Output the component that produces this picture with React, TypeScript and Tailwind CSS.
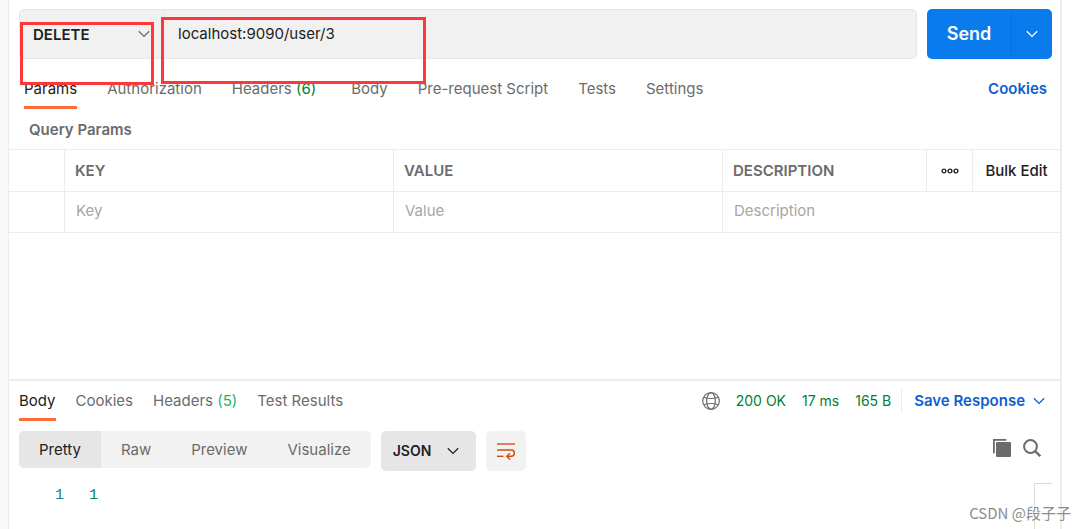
import { clsx } from "clsx";

const requestTabs = [
  { label: "Params", active: true },
  { label: "Authorization" },
  { label: "Headers", count: 6 },
  { label: "Body" },
  { label: "Pre-request Script" },
  { label: "Tests" },
  { label: "Settings" }
];

const responseTabs = [
  { label: "Body", active: true },
  { label: "Cookies" },
  { label: "Headers", count: 5 },
  { label: "Test Results" }
];

const viewModes = ["Pretty", "Raw", "Preview", "Visualize"];
const methods = ["DELETE", "GET", "POST", "PUT", "PATCH"];

type Tab = { label: string; active?: boolean; count?: number };

function Chevron({ className }: { className?: string }) {
  return (
    <svg viewBox="0 0 12 8" className={clsx("h-2 w-3 shrink-0", className)} fill="none" stroke="currentColor" strokeWidth="1.3" aria-hidden="true">
      <path d="M0.8 1.2 6 6.4l5.2-5.2" />
    </svg>
  );
}

function GlobeIcon() {
  return (
    <svg viewBox="0 0 18 18" className="h-[18px] w-[18px] text-[#6b6b6b]" fill="none" stroke="currentColor" strokeWidth="1.2" aria-hidden="true">
      <circle cx="9" cy="9" r="8.3" />
      <ellipse cx="9" cy="9" rx="4.3" ry="8.3" />
      <path d="M2 5.2c2 .9 4.4 1.3 7 1.3s5-.4 7-1.3M2 12.8c2-.9 4.4-1.3 7-1.3s5 .4 7 1.3" />
    </svg>
  );
}

function WrapIcon() {
  return (
    <svg viewBox="0 0 18 18" className="h-[18px] w-[18px]" fill="none" stroke="#d9480f" strokeWidth="1.4" aria-hidden="true">
      <path d="M0 2h18" strokeWidth="1.8" opacity="0.75" />
      <path d="M0 8h14.2a3.1 3.1 0 0 1 0 6.3H10" />
      <path d="m13 11.2-3.2 3.1 3.2 3.1" />
      <path d="M0 14.3h6.5" />
    </svg>
  );
}

function CopyIcon() {
  return (
    <svg viewBox="0 0 18 18" className="h-[18px] w-[18px]" aria-hidden="true">
      <path d="M0.9 14.2V0.9h12.4" fill="none" stroke="#6b6b6b" strokeWidth="1.8" />
      <rect x="3" y="3" width="15" height="15" rx="1" fill="#6b6b6b" />
    </svg>
  );
}

function SearchIcon() {
  return (
    <svg viewBox="0 0 18 18" className="h-[18px] w-[18px]" fill="none" stroke="#6b6b6b" strokeWidth="2" aria-hidden="true">
      <circle cx="7.5" cy="7.5" r="6.4" />
      <path d="m12 12 5.3 5.2" strokeWidth="2.4" />
    </svg>
  );
}

function TabList({ tabs, className, countClass }: { tabs: Tab[]; className: string; countClass: string }) {
  return (
    <div role="tablist" className={clsx("flex h-10", className)}>
      {tabs.map((tab) => (
        <button
          key={tab.label}
          role="tab"
          aria-selected={!!tab.active}
          className={clsx(
            "whitespace-nowrap border-b-[3px] pt-[3px]",
            tab.active ? "border-[#ff6c37] text-[#212121]" : "border-transparent text-[#6b6b6b]"
          )}
        >
          {tab.label}
          {tab.count && <span className={countClass}> ({tab.count})</span>}
        </button>
      ))}
    </div>
  );
}

function RequestBar() {
  return (
    <div className="flex h-[59px] gap-2.5 pl-2.5 pr-2 pt-[9px]">
      <div className="flex min-w-0 flex-1 rounded-[5px] border border-[#e6e6e6] bg-[#f1f1f1]">
        <div className="relative flex w-36 shrink-0 items-center border-r border-[#e6e6e6]">
          <select aria-label="Method" className="h-full w-full appearance-none bg-transparent pl-[13px] pt-0.5 text-[15px] font-semibold text-[#212121]">
            {methods.map((m) => (
              <option key={m}>{m}</option>
            ))}
          </select>
          <Chevron className="pointer-events-none absolute right-[13px] text-[#6b6b6b]" />
        </div>
        <input
          aria-label="Request URL"
          defaultValue="localhost:9090/user/3"
          className="min-w-0 flex-1 bg-transparent px-3.5 text-[#212121] outline-none"
        />
      </div>
      <div className="flex overflow-hidden rounded-[5px] bg-[#097bed] text-white">
        <button className="w-[84px] text-lg font-semibold">Send</button>
        <button aria-label="Send options" className="flex w-[41px] items-center justify-center border-l border-[#0a6fd6]">
          <Chevron />
        </button>
      </div>
    </div>
  );
}

function ParamsTable() {
  const head = "border-b border-r border-[#ededed] px-2.5 text-left font-semibold";
  const cell = "border-b border-[#ededed] p-0";
  const field = "h-10 w-full px-[11px] pb-1 outline-none placeholder:text-[#a6a6a6]";
  return (
    <table className="w-full table-fixed border-separate border-spacing-0 border-t border-[#ededed]">
      <colgroup>
        <col className="w-14" />
        <col />
        <col />
        <col className="w-[204px]" />
        <col className="w-[46px]" />
        <col className="w-[87px]" />
      </colgroup>
      <thead className="text-[#6b6b6b]">
        <tr className="h-[42px]">
          <th className={head} aria-label="Enabled" />
          <th className={head}>KEY</th>
          <th className={head}>VALUE</th>
          <th className={head}>DESCRIPTION</th>
          <th className="border-b border-r border-[#ededed] p-0">
            <button aria-label="Column options" className="flex h-10 w-full items-center justify-center">
              <svg viewBox="0 0 18 6" className="h-1.5 w-[18px]" fill="none" stroke="#212121" strokeWidth="1.4" aria-hidden="true">
                <circle cx="3" cy="3" r="1.9" />
                <circle cx="9" cy="3" r="1.9" />
                <circle cx="15" cy="3" r="1.9" />
              </svg>
            </button>
          </th>
          <th className="border-b border-[#ededed] p-0">
            <button className="whitespace-nowrap font-medium text-[#212121]">Bulk Edit</button>
          </th>
        </tr>
      </thead>
      <tbody>
        <tr>
          <td className={clsx(cell, "border-r")} />
          <td className={clsx(cell, "border-r")}>
            <input aria-label="Key" placeholder="Key" className={field} />
          </td>
          <td className={clsx(cell, "border-r")}>
            <input aria-label="Value" placeholder="Value" className={field} />
          </td>
          <td className={cell} colSpan={3}>
            <input aria-label="Description" placeholder="Description" className={field} />
          </td>
        </tr>
      </tbody>
    </table>
  );
}

function ResponsePane() {
  return (
    <section className="border-t-2 border-[#ededed]">
      <div className="flex items-start justify-between pl-2.5 pr-[15px]">
        <TabList tabs={responseTabs} className="gap-5" countClass="text-[#26b562]" />
        <div className="flex h-10 items-center text-sm text-[#007f31]">
          <GlobeIcon />
          <span className="ml-4">200 OK</span>
          <span className="ml-4">17 ms</span>
          <span className="ml-4">165 B</span>
          <span className="ml-2.5 h-6 border-l border-[#ededed]" />
          <button className="ml-3 flex items-center gap-2 text-[15px] font-semibold text-[#0b5fd0]">
            Save Response
            <Chevron />
          </button>
        </div>
      </div>

      <div className="mt-2.5 flex items-start gap-2.5 pl-2.5 pr-[19px]">
        <div className="flex h-[37px] overflow-hidden rounded-[5px] bg-[#f2f2f2]">
          {viewModes.map((mode) => (
            <button
              key={mode}
              className={clsx("px-5", mode === "Pretty" ? "bg-[#e6e6e6] text-[#212121]" : "text-[#6b6b6b]")}
            >
              {mode}
            </button>
          ))}
        </div>
        <div className="relative flex h-10 w-[95px] items-center rounded-[5px] bg-[#e6e6e6]">
          <select aria-label="Format" className="h-full w-full appearance-none bg-transparent pl-3 text-sm font-semibold text-[#212121]">
            <option>JSON</option>
            <option>XML</option>
            <option>HTML</option>
            <option>Text</option>
          </select>
          <Chevron className="pointer-events-none absolute right-[17px] text-[#212121]" />
        </div>
        <button aria-label="Wrap lines" className="flex h-10 w-10 items-center justify-center rounded-[5px] bg-[#f2f2f2]">
          <WrapIcon />
        </button>
        <div className="ml-auto flex gap-3 pt-2">
          <button aria-label="Copy"><CopyIcon /></button>
          <button aria-label="Search"><SearchIcon /></button>
        </div>
      </div>

      <div className="mt-3 flex h-[46px] justify-between pr-2 font-['Liberation_Mono',monospace]">
        <div className="flex pl-[46px] pt-0.5 leading-[22px]">
          <span className="w-[34px] text-[#237893]">1</span>
          <code className="font-['Liberation_Mono',monospace] text-[#098658]">1</code>
        </div>
        <div className="w-[18px] border-l border-t border-[#dcdcdc]" />
      </div>
    </section>
  );
}

export default function App() {
  return (
    <div className="relative flex min-h-screen overflow-hidden bg-white pr-6 font-['Inter',sans-serif] text-[15px] leading-5">
      <div className="w-[9px] shrink-0 border-r border-[#ededed] bg-[#f9f9f9]" />
      <main className="flex min-w-0 flex-1 flex-col border-r-2 border-[#ededed]">
        <RequestBar />
        <div className="flex justify-between pl-[15px] pr-[13px] pt-2.5">
          <TabList tabs={requestTabs} className="gap-[30px]" countClass="mr-[5px] text-[#007f31]" />
          <a href="#cookies" className="pt-2.5 font-semibold text-[#0b5fd0]">Cookies</a>
        </div>
        <h2 className="mb-[9px] mt-[11px] pl-5 font-semibold text-[#6b6b6b]">Query Params</h2>
        <ParamsTable />
        <div className="flex-1" />
        <ResponsePane />
      </main>

      {/* highlight boxes drawn over the method and the url */}
      <div className="pointer-events-none absolute left-5 top-[22px] h-[63px] w-[134px] border-[3px] border-[#fe3838]" />
      <div className="pointer-events-none absolute left-[161px] top-[17px] h-[67px] w-[265px] border-[3px] border-[#fe3838]" />
      <div className="absolute bottom-1.5 right-[15px] font-['Noto_Sans_CJK_SC',sans-serif] text-[#8c8c8c]">CSDN @段子子</div>
    </div>
  );
}
